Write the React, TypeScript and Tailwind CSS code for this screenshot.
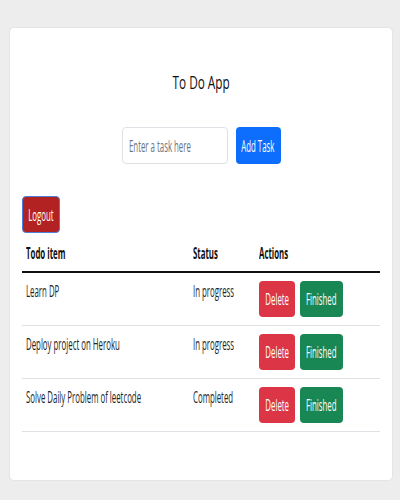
const todos = [
  { id: 1, title: 'Learn DP', status: 'In progress' },
  { id: 2, title: 'Deploy project on Heroku', status: 'In progress' },
  { id: 3, title: 'Solve Daily Problem of leetcode', status: 'Completed' },
];

// the page text is narrow, so squeeze every label the same way
const squeeze = 'inline-block whitespace-nowrap scale-x-[0.49]';

export default function App() {
  return (
    <div className="min-h-[500px] bg-[#ededed] px-[10px] pt-[28px] pr-[8px] font-['Open_Sans',sans-serif]">
      <div className="h-[452px] rounded-[4px] bg-white px-[12px] shadow-[0_0_2px_rgba(0,0,0,0.12)]">
        {/* Title */}
        <h1 className="flex justify-center pt-[42px] text-[19px] font-medium leading-[24px] text-[#111]">
          <span className="inline-block whitespace-nowrap scale-x-[0.62]">To Do App</span>
        </h1>

        {/* New task form */}
        <div className="mt-[33px] flex justify-center gap-[8px] text-[16px]">
          <div className="flex h-[37px] w-[106px] items-center overflow-hidden rounded-[4px] border border-[#dee2e6] pl-[6px] text-[#6c757d]">
            <span className={`${squeeze} origin-left`}>Enter a task here</span>
          </div>
          <button className="flex h-[37px] w-[45px] items-center justify-center rounded-[4px] bg-[#0d6efd] text-white">
            <span className={squeeze}>Add Task</span>
          </button>
        </div>

        {/* Logout */}
        <button className="mt-[32px] flex h-[37px] w-[38px] items-center justify-center rounded-[4px] border border-[#4d7fd6] bg-[#b22222] text-[16px] text-white">
          <span className={squeeze}>Logout</span>
        </button>

        {/* Tasks table */}
        <div className="mt-[2px] text-[16px]">
          <div className="flex h-[38px] items-center border-b-2 border-[#111] font-bold text-[#111]">
            <div className="w-[166px] px-[4px]">
              <span className={`${squeeze} origin-left`}>Todo item</span>
            </div>
            <div className="w-[66px] px-[5px]">
              <span className={`${squeeze} origin-left`}>Status</span>
            </div>
            <div className="px-[5px]">
              <span className={`${squeeze} origin-left`}>Actions</span>
            </div>
          </div>
          {todos.map((t) => (
            <div key={t.id} className="flex border-b border-[#dee2e6] py-[8px] text-[#212529]">
              <div className="w-[166px] px-[4px] leading-[20px]">
                <span className={`${squeeze} origin-left`}>{t.title}</span>
              </div>
              <div className="w-[66px] px-[5px] leading-[20px]">
                <span className={`${squeeze} origin-left`}>{t.status}</span>
              </div>
              <div className="flex gap-[5px] px-[5px]">
                <button className="flex h-[36px] w-[36px] items-center justify-center rounded-[4px] bg-[#dc3545] text-white">
                  <span className={squeeze}>Delete</span>
                </button>
                <button className="flex h-[36px] w-[43px] items-center justify-center rounded-[4px] bg-[#198754] text-white">
                  <span className={squeeze}>Finished</span>
                </button>
              </div>
            </div>
          ))}
        </div>
      </div>
    </div>
  );
}
